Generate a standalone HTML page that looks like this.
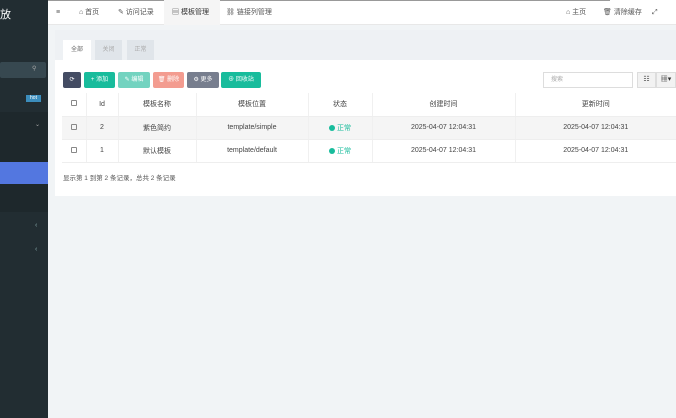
<!DOCTYPE html>
<html><head><meta charset="utf-8"><style>
*{margin:0;padding:0;box-sizing:border-box}
body{width:676px;height:418px;overflow:hidden;background:#f1f4f6;font-family:"Liberation Sans","Noto Sans CJK SC",sans-serif;font-size:7px;color:#333;position:relative}
.a{position:absolute}
.sb{left:0;top:0;width:48px;height:418px;background:#222d32}
.hd{left:48px;top:0;width:628px;height:25px;background:#fff;border-bottom:1px solid #e8e8e8}
.nav{top:0;height:25px;line-height:25px;color:#555;font-size:7px}
.btn{top:72px;height:16px;line-height:16px;color:#fff;border-radius:2px;font-size:6px;text-align:center}
table{border-collapse:collapse;position:absolute;left:62px;top:93px;width:614px;font-size:7px;color:#444}
td{height:23px;text-align:center;border-bottom:1px solid #eee;border-left:1px solid #f0f0f0}
tr.g td{background:#f5f5f5}
.cb{display:inline-block;width:6px;height:6px;border:1px solid #888;border-radius:1px}
.ok{color:#18bc9c}.ok i{display:inline-block;width:6px;height:6px;border-radius:50%;background:#18bc9c;vertical-align:-1px;margin-right:2px}
</style></head><body>
<div class="a sb"></div>
<div class="a" style="left:0;top:6px;color:#fff;font-size:11px">放</div>
<div class="a" style="left:0;top:62px;width:46px;height:16px;background:#374850;border-radius:2px"></div>
<div class="a" style="left:32px;top:65px;color:#aaa;font-size:6px">⚲</div>
<div class="a" style="left:26px;top:95px;width:15px;height:7px;background:#3c8dbc;color:#fff;font-size:5px;line-height:7px;text-align:center">hot</div>
<div class="a" style="left:0;top:112px;width:48px;height:100px;background:#1e282c"></div>
<div class="a" style="left:35px;top:121px;color:#aaa;font-size:6px">⌄</div>
<div class="a" style="left:0;top:162px;width:48px;height:22px;background:#5377e0"></div>
<div class="a" style="left:35px;top:222px;color:#8aa;font-size:7px">‹</div>
<div class="a" style="left:35px;top:246px;color:#8aa;font-size:7px">‹</div>
<div class="a hd"></div>
<div class="a" style="left:48px;top:0;width:562px;height:1px;background:#999"></div>
<div class="a nav" style="left:56px">≡</div>
<div class="a nav" style="left:79px">⌂ 首页</div>
<div class="a nav" style="left:118px">✎ 访问记录</div>
<div class="a" style="left:164px;top:0;width:56px;height:25px;background:#f5f5f5"></div>
<div class="a nav" style="left:172px;color:#333">▤ 模板管理</div>
<div class="a nav" style="left:226px">⛓ 链接列管理</div>
<div class="a nav" style="left:566px">⌂ 主页</div>
<div class="a nav" style="left:603px">🗑 清除缓存</div>
<div class="a nav" style="left:652px">⤢</div>
<div class="a" style="left:55px;top:30px;width:621px;height:166px;background:#fff"></div>
<div class="a" style="left:55px;top:30px;width:621px;height:30px;background:#eef1f4"></div>
<div class="a" style="left:63px;top:40px;width:28px;height:20px;background:#fff;color:#666;font-size:6px;text-align:center;line-height:20px">全部</div>
<div class="a" style="left:95px;top:40px;width:27px;height:20px;background:#e0e5ea;color:#aaa;font-size:6px;text-align:center;line-height:20px">关闭</div>
<div class="a" style="left:127px;top:40px;width:27px;height:20px;background:#e0e5ea;color:#aaa;font-size:6px;text-align:center;line-height:20px">正常</div>
<div class="a btn" style="left:63px;width:18px;background:#444c63">⟳</div>
<div class="a btn" style="left:84px;width:31px;background:#18bc9c">+ 添加</div>
<div class="a btn" style="left:118px;width:32px;background:#73d3c0">✎ 编辑</div>
<div class="a btn" style="left:153px;width:31px;background:#f39c90">🗑 删除</div>
<div class="a btn" style="left:187px;width:32px;background:#777e8e">⚙ 更多</div>
<div class="a btn" style="left:221px;width:40px;background:#18bc9c">⊕ 回收站</div>
<div class="a" style="left:543px;top:72px;width:90px;height:16px;border:1px solid #ddd;color:#aaa;font-size:6px;line-height:14px;padding-left:7px">搜索</div>
<div class="a" style="left:637px;top:72px;width:19px;height:16px;background:#f2f2f2;border:1px solid #ddd;text-align:center;line-height:14px;font-size:7px">☷</div>
<div class="a" style="left:656px;top:72px;width:20px;height:16px;background:#f2f2f2;border:1px solid #ddd;text-align:center;line-height:14px;font-size:7px">▦▾</div>
<table>
<tr><td style="width:24px;border-left:0"><span class="cb"></span></td><td style="width:32px">Id</td><td style="width:78px">模板名称</td><td style="width:112px">模板位置</td><td style="width:64px">状态</td><td style="width:143px">创建时间</td><td>更新时间</td></tr>
<tr class="g"><td style="border-left:0"><span class="cb"></span></td><td>2</td><td>紫色简约</td><td>template/simple</td><td class="ok"><i></i>正常</td><td>2025-04-07 12:04:31</td><td>2025-04-07 12:04:31</td></tr>
<tr><td style="border-left:0"><span class="cb"></span></td><td>1</td><td>默认模板</td><td>template/default</td><td class="ok"><i></i>正常</td><td>2025-04-07 12:04:31</td><td>2025-04-07 12:04:31</td></tr>
</table>
<div class="a" style="left:63px;top:172px;color:#555;font-size:6.5px">显示第 1 到第 2 条记录，总共 2 条记录</div>
</body></html>
